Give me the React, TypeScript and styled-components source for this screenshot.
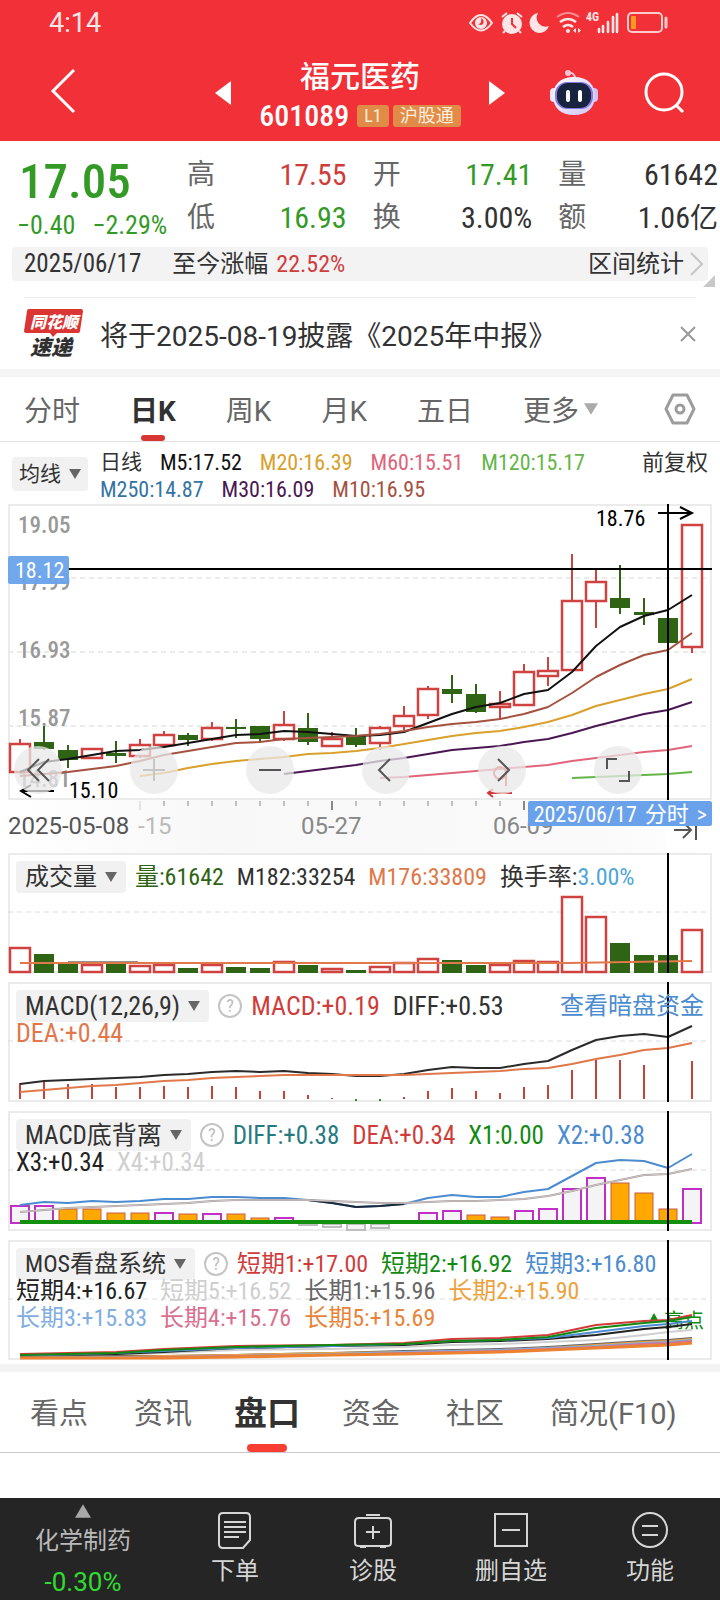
import React from 'react';
import styled, { createGlobalStyle, css } from 'styled-components';

const FONT = '"Roboto Condensed", Roboto, "Noto Sans CJK SC", sans-serif';
const WIDE_FONT = 'Roboto, "Noto Sans CJK SC", sans-serif';

const colors = {
  brand: '#f13037',
  up: '#cf3d3b',
  down: '#349a26',
  ink: '#323232',
  muted: '#666666',
  band: '#f4f4f4',
  chip: '#f1f1f1',
  frame: '#ebebeb',
  candleDown: '#2f6414',
  candleUp: '#d04240',
  blue: '#4b8bd0',
  orange: '#e0784a',
  tag: '#69a2ea',
};

const GlobalStyle = createGlobalStyle`
  * { box-sizing: border-box; }
  body { margin: 0; background: #fff; }
  button { font: inherit; color: inherit; background: none; border: 0; padding: 0; margin: 0; cursor: pointer; }
  a { color: inherit; text-decoration: none; }
  svg { display: block; }
`;

const Page = styled.div`
  display: flex;
  flex-direction: column;
  min-height: 100vh;
  font-family: ${FONT};
  color: ${colors.ink};
  overflow-x: hidden;
`;

/* ---------- header ---------- */

const Header = styled.header`
  background: ${colors.brand};
  color: #fff;
  height: 141px;
`;

const StatusBar = styled.div`
  display: flex;
  justify-content: space-between;
  align-items: center;
  height: 46px;
  padding: 0 50px 0 49px;
`;

const Clock = styled.time`
  font: 27px/30px Roboto, sans-serif;
  color: #ffe6e6;
`;

const TitleBar = styled.div`
  display: grid;
  grid-template-columns: 1fr auto 1fr;
  align-items: center;
  height: 94px;
  padding: 0 34px 0 50px;
`;

const TitleMiddle = styled.div`
  display: flex;
  align-items: center;
  justify-content: space-between;
  width: 290px;
  margin-right: 16px;
`;

const TitleText = styled.div`
  display: flex;
  flex-direction: column;
  align-items: center;
  padding-top: 6px;
`;

const StockName = styled.h1`
  margin: 0;
  font-size: 30px;
  line-height: 40px;
  font-weight: 500;
`;

const StockCode = styled.div`
  display: flex;
  align-items: center;
  gap: 4px;
  font-size: 30px;
  line-height: 38px;
  font-weight: 500;
`;

const CodeNumber = styled.span`
  margin-right: 4px;
`;

const Badge = styled.span`
  padding: 0 7px;
  border-radius: 3px;
  background: #e08c48;
  color: #fdeedd;
  font-size: 18px;
  line-height: 22px;
  font-weight: 400;
`;

const HeaderActions = styled.div`
  display: flex;
  justify-content: flex-end;
  align-items: center;
  gap: 46px;
`;

/* ---------- quote ---------- */

const Quote = styled.section`
  display: grid;
  grid-template-columns: 170px 186fr 186fr 160fr;
  height: 106px;
  padding: 12px 2px 0 17px;
`;

const LastPrice = styled.div`
  color: ${colors.down};
  display: flex;
  flex-direction: column;
`;

const PriceValue = styled.strong`
  font-size: 49px;
  line-height: 58px;
  font-weight: 500;
  padding-left: 2px;
`;

const PriceChange = styled.div`
  display: flex;
  gap: 17px;
  font-size: 26px;
  line-height: 28px;
`;

const QuoteColumn = styled.dl`
  margin: 0;
  padding-right: 26px;
  &:last-child { padding-right: 0; }
`;

const QuoteItem = styled.div`
  display: flex;
  justify-content: space-between;
  align-items: center;
  height: 43px;
`;

const QuoteLabel = styled.dt`
  color: ${colors.muted};
  font-size: 28px;
  line-height: 43px;
`;

const QuoteValue = styled.dd<{ $color?: string }>`
  margin: 0;
  font-size: 30px;
  line-height: 43px;
  white-space: nowrap;
  color: ${(p) => p.$color ?? colors.ink};
  small { font-size: 28px; }
`;

const RangeBar = styled.section`
  position: relative;
  display: flex;
  align-items: center;
  height: 34px;
  margin: 0 12px;
  padding: 0 4px 0 12px;
  border-radius: 4px;
  background: #f3f3f3;
  font-size: 24px;
  line-height: 34px;
`;

const RangeDate = styled.time`
  font-size: 25px;
`;

const RangeLabel = styled.span`
  margin: 0 8px 0 31px;
`;

const RangeButton = styled.button`
  display: flex;
  align-items: center;
  gap: 6px;
  margin-left: auto;
`;

const Corner = styled.span`
  position: absolute;
  right: -7px;
  bottom: -6px;
  border: 6px solid #c8c8c8;
  border-top-color: transparent;
  border-left-color: transparent;
`;

const Notice = styled.section`
  display: flex;
  align-items: center;
  height: 72px;
  margin: 16px 24px 0;
  border-top: 1px solid #e9e9e9;
  font-family: ${WIDE_FONT};
  font-size: 28px;
`;

const NoticeText = styled.a`
  flex: 1;
  margin-left: 16px;
  white-space: nowrap;
`;

const Band = styled.div`
  height: 8px;
  background: ${colors.band};
`;

/* ---------- period tabs ---------- */

const PeriodTabs = styled.nav`
  display: flex;
  align-items: stretch;
  gap: 50px;
  height: 65px;
  padding: 0 24px;
  border-bottom: 1px solid #e3e3e3;
  font-family: ${WIDE_FONT};
  font-size: 28px;
  color: ${colors.muted};
`;

const PeriodTab = styled.button<{ $active?: boolean }>`
  display: flex;
  align-items: center;
  gap: 5px;
  white-space: nowrap;
  ${(p) =>
    p.$active &&
    css`
      position: relative;
      color: ${colors.ink};
      font-weight: 700;
      &::after {
        content: '';
        position: absolute;
        left: 50%;
        bottom: 0;
        width: 24px;
        height: 6px;
        margin-left: -12px;
        border-radius: 3px;
        background: #d73532;
      }
    `}
`;

const SettingsButton = styled.button`
  margin-left: auto;
`;

const MaBar = styled.section`
  display: flex;
  align-items: flex-start;
  height: 62px;
  padding: 7px 12px 0;
  font-size: 22px;
  line-height: 27px;
`;

const MaSelect = styled.button`
  display: flex;
  align-items: center;
  justify-content: space-between;
  width: 76px;
  height: 34px;
  margin-top: 8px;
  padding: 0 7px;
  border-radius: 4px;
  background: ${colors.chip};
  font-size: 21px;
`;

const MaValues = styled.div`
  flex: 1;
  margin-left: 12px;
`;

const MaRow = styled.div`
  display: flex;
  gap: 18px;
`;

const MaTitle = styled.span`
  font-size: 21px;
`;

const Tint = styled.span<{ $color: string }>`
  color: ${(p) => p.$color};
  white-space: nowrap;
`;

/* ---------- charts ---------- */

const Charts = styled.main`
  display: flex;
  flex-direction: column;
  padding: 0 8px 4px;
`;

const Panel = styled.section`
  display: grid;
  margin-bottom: 9px;
  box-shadow: inset 0 0 0 2px ${colors.frame};
  & > * { grid-area: 1 / 1; min-width: 0; }
  &:last-child { margin-bottom: 0; }
`;

const PricePanel = styled(Panel)`
  margin-bottom: 0;
`;

const Plot = styled.svg`
  width: 100%;
  height: auto;
  overflow: visible;
  font-family: ${FONT};
`;

const ChartTools = styled.div`
  align-self: end;
  display: flex;
  justify-content: space-between;
  padding: 0 70px 6px 6px;
`;

const ToolButton = styled.button<{ $dim?: boolean }>`
  display: grid;
  place-items: center;
  width: 48px;
  height: 48px;
  border-radius: 50%;
  background: rgba(232, 232, 232, 0.75);
  color: ${(p) => (p.$dim ? '#c6c6c6' : '#555')};
`;

const Axis = styled.div`
  position: relative;
  height: 53px;
  background: linear-gradient(90deg, #fff 0, #f8f8f8 200px, #fafafa 85%, #fff 100%);
`;

const DateTag = styled.button`
  position: absolute;
  right: 0;
  top: 1px;
  display: flex;
  gap: 8px;
  height: 25px;
  padding: 0 5px 0 6px;
  border-radius: 2px;
  background: ${colors.tag};
  color: #fff;
  font-size: 22px;
  line-height: 27px;
`;

const LatestButton = styled.button`
  position: absolute;
  right: 6px;
  top: 10px;
  display: grid;
  place-items: center;
  width: 40px;
  height: 40px;
  border-radius: 6px;
  background: #fff;
`;

const Legend = styled.div<{ $size: number }>`
  padding: 7px 8px 0;
  font-size: ${(p) => p.$size}px;
`;

const LegendRow = styled.div`
  display: flex;
  align-items: center;
  gap: 13px;
  line-height: 27px;
  &:first-child {
    height: 34px;
    margin-bottom: -3px;
  }
`;

const IndicatorSelect = styled.button`
  display: flex;
  align-items: center;
  gap: 8px;
  height: 32px;
  padding: 0 9px;
  margin-right: -4px;
  border-radius: 4px;
  background: ${colors.chip};
  white-space: nowrap;
`;

const HelpButton = styled.button`
  width: 24px;
  height: 24px;
  margin-right: -4px;
  flex: none;
  border: 2px solid #c4c4c4;
  border-radius: 50%;
  color: #bbb;
  font-size: 18px;
  line-height: 20px;
`;

const LegendLink = styled.a`
  margin-left: auto;
  color: ${colors.blue};
  font-size: 24px;
  white-space: nowrap;
`;

/* ---------- lower tabs and footer ---------- */

const InfoTabs = styled.nav`
  display: flex;
  gap: 46px;
  height: 81px;
  padding: 0 30px;
  border-bottom: 1px solid #c9c9c9;
  font-family: ${WIDE_FONT};
  font-size: 29px;
  color: ${colors.muted};
`;

const InfoTab = styled.button<{ $active?: boolean }>`
  white-space: nowrap;
  padding-bottom: 2px;
  ${(p) =>
    p.$active &&
    css`
      position: relative;
      margin: 0 -4px;
      color: ${colors.ink};
      font-size: 33px;
      font-weight: 700;
      &::after {
        content: '';
        position: absolute;
        left: 50%;
        bottom: 0;
        width: 40px;
        height: 8px;
        margin-left: -20px;
        border-radius: 4px;
        background: #f93c34;
      }
    `}
`;

const Footer = styled.footer`
  display: grid;
  grid-template-columns: 166fr 138fr 138fr 138fr 140fr;
  height: 102px;
  margin-top: auto;
  background: #252525;
  color: #d6d6d6;
  font-size: 24px;
`;

const FooterButton = styled.button`
  display: flex;
  flex-direction: column;
  align-items: center;
  padding-top: 14px;
`;

const FooterLabel = styled.span`
  margin-top: 5px;
  line-height: 32px;
`;

const Sector = styled.a`
  display: flex;
  flex-direction: column;
  align-items: center;
  padding-top: 6px;
`;

const SectorName = styled.span`
  margin-top: 6px;
  line-height: 34px;
  color: #b9b9b9;
`;

const SectorChange = styled.span`
  margin-top: 8px;
  font-family: ${WIDE_FONT};
  font-size: 26px;
  line-height: 32px;
  color: #2fdc2f;
`;

/* ---------- small drawings ---------- */

const Caret = ({ size = 12, color = '#666', up = false }: { size?: number; color?: string; up?: boolean }) => (
  <svg width={size} height={size - 2} viewBox="0 0 12 10" aria-hidden="true">
    <path d={up ? 'M6 0 12 10H0Z' : 'M0 0H12L6 10Z'} fill={color} />
  </svg>
);

const StatusIcons = () => (
  <svg width="201" height="32" viewBox="0 -4 201 32" fill="none" stroke="#ffe6e6" aria-hidden="true">
    <path d="M1 12Q12 -4 23 12Q12 27 1 12Z" strokeWidth="2" />
    <circle cx="12" cy="12" r="6" fill="#ffe6e6" stroke="none" />
    <path d="M12 7a4 4 0 0 1 2 6q-2 2-5 0q4 0 3-6Z" fill={colors.brand} stroke="none" />
    <circle cx="43" cy="13" r="9" fill="#ffe6e6" stroke="#ffe6e6" strokeWidth="2" />
    <path d="M33 6l5-4M53 6l-5-4M36 20l-2 2M50 20l2 2" strokeWidth="2" />
    <path d="M43 7v6l4 4" stroke={colors.brand} strokeWidth="2" />
    <path d="M69 2a10 10 0 1 0 11 13a9 9 0 0 1-11-13Z" fill="#ffe6e6" stroke="none" />
    <path d="M88 6q11-8 22 0" strokeWidth="2" opacity=".5" />
    <path d="M91 11q8-6 16 0M94 16q5-4 10 0" strokeWidth="2.6" />
    <circle cx="99" cy="20" r="2" fill="#ffe6e6" stroke="none" />
    <path d="M107 17v5l-3-2.500ZM109 17v5l3-2.500Z" fill="#ffe6e6" stroke="none" />
    <text x="117" y="10" fontSize="12" fontWeight="700" fill="#ffe6e6" stroke="none">4G</text>
    <path d="M130 18v3M134 15v6M139 11v10M144 6v15M148 3v18" strokeWidth="2.6" strokeLinecap="round" />
    <rect x="159" y="2" width="34" height="19" rx="4" strokeWidth="2" opacity=".85" />
    <rect x="162" y="5" width="5" height="13" rx="1" fill="#ff9a1e" stroke="none" />
    <path d="M197 7v9" strokeWidth="3" strokeLinecap="round" opacity=".85" />
  </svg>
);

const Robot = () => (
  <svg width="48" height="46" viewBox="0 0 48 46" aria-hidden="true">
    <defs>
      <linearGradient id="shell" x1="0" y1="0" x2="1" y2="1">
        <stop offset="0" stopColor="#ffffff" />
        <stop offset="1" stopColor="#cfc4f7" />
      </linearGradient>
    </defs>
    <path d="M18 3q7-1 7 6" fill="none" stroke="#ffc5d2" strokeWidth="2" />
    <circle cx="18" cy="3" r="3" fill="#ffc5d2" />
    <rect x="0" y="18" width="8" height="14" rx="4" fill="#f0e6fb" />
    <rect x="40" y="18" width="8" height="14" rx="4" fill="#cfc3f6" />
    <path d="M24 7C38 7 45 15 45 26C45 38 37 45 24 45S3 38 3 26C3 15 10 7 24 7Z" fill="url(#shell)" />
    <rect x="5" y="12" width="38" height="27" rx="12" fill="#8279dc" />
    <rect x="7" y="13" width="34" height="25" rx="11" fill="#18233f" />
    <path d="M18 22v8M30 22v8" stroke="#fff" strokeWidth="4" strokeLinecap="round" />
  </svg>
);

const NewsLogo = () => (
  <svg width="60" height="52" viewBox="0 0 60 52" role="img" aria-label="同花顺速递">
    <path d="M5 1H57q2 0 2 2L56 23q0 2-2 2H33l-4 4-3-4H2q-2 0-2-2L3 3q0-2 2-2Z" fill="#da3433" />
    <text x="6" y="20" fontSize="16" fontWeight="900" fontStyle="italic" fill="#fff">同花顺</text>
    <text x="6" y="47" fontSize="21" fontWeight="900" fontStyle="italic" fill="#303030">速递</text>
  </svg>
);

/* ---------- data ---------- */

const X = (i: number) => 12 + 24 * i;
const CROSS_X = X(27);

const points = (ys: number[], from = 0) => ys.map((y, k) => `${X(from + k)},${y}`).join(' ');

type Candle = [up: 0 | 1, high: number, top: number, bottom: number, low: number];

const candles: Candle[] = [
  [1, 235, 240, 268, 268], [0, 222, 238, 245, 246], [0, 241, 246, 256, 264], [1, 244, 245, 254, 254],
  [0, 237, 249, 252, 259], [1, 235, 241, 252, 254], [1, 227, 231, 241, 243], [0, 229, 231, 236, 242],
  [1, 218, 224, 235, 237], [0, 215, 223, 225, 234], [0, 222, 222, 235, 238], [1, 207, 221, 235, 237],
  [0, 209, 224, 238, 241], [1, 228, 235, 242, 242], [0, 224, 231, 241, 243], [1, 222, 224, 239, 246],
  [1, 202, 212, 222, 226], [1, 182, 185, 211, 215], [0, 171, 185, 190, 199], [0, 180, 190, 208, 209],
  [1, 187, 200, 203, 215], [1, 160, 168, 201, 201], [1, 153, 167, 172, 182], [1, 50, 97, 166, 166],
  [1, 66, 78, 97, 124], [0, 61, 94, 104, 110], [0, 94, 108, 111, 121], [0, 114, 114, 139, 139],
  [1, 21, 21, 143, 149],
];

const averages = [
  { color: '#111', from: 0, ys: [268, 258, 255, 251, 247, 246, 243, 239, 235, 231, 230, 227, 228, 230, 232, 231, 228, 219, 210, 203, 199, 190, 186, 168, 142, 123, 112, 106, 91] },
  { color: '#a5513f', from: 0, ys: [272, 270, 268, 265, 262, 257, 251, 247, 243, 239, 238, 235, 234, 233, 232, 230, 227, 223, 220, 218, 215, 210, 203, 189, 173, 161, 151, 146, 129] },
  { color: '#d9a02b', from: 5, ys: [272, 269, 264, 260, 257, 255, 253, 250, 249, 247, 244, 240, 236, 232, 229, 227, 223, 218, 211, 202, 196, 190, 185, 175] },
  { color: '#4a1752', from: 11, ys: [270, 267, 264, 261, 257, 254, 250, 246, 244, 242, 238, 235, 229, 222, 216, 210, 206, 198] },
  { color: '#e0647a', from: 15, ys: [274, 273, 271, 269, 267, 265, 263, 261, 257, 254, 251, 248, 246, 242] },
  { color: '#64b548', from: 23, ys: [274, 273, 272, 271, 270, 268] },
];

const volumes: [0 | 1, number][] = [
  [1, 95], [0, 101], [0, 109], [1, 112], [0, 111], [1, 113], [1, 112], [0, 115], [1, 112], [0, 114],
  [0, 115], [1, 109], [0, 112], [1, 116], [0, 117], [1, 114], [1, 110], [1, 106], [0, 107], [0, 112],
  [1, 112], [1, 108], [1, 109], [1, 44], [1, 64], [0, 90], [0, 102], [0, 102], [1, 77],
];

const macdBars = [101, 100, 102, 102, 105, 105, 104, 105, 104, 105, 109, 109, 113, 116, 119, 119, 115, 109, 106, 109, 111, 105, 103, 88, 78, 78, 83, 95, 79];
const macdDiff = [102, 99, 98, 97, 96, 95, 93, 92, 90, 89, 90, 89, 91, 92, 94, 94, 92, 88, 85, 86, 86, 82, 79, 68, 58, 54, 52, 55, 44];
const macdDea = [110, 108, 106, 104, 103, 101, 99, 98, 96, 95, 94, 93, 93, 93, 93, 93, 93, 92, 91, 90, 89, 87, 86, 82, 77, 73, 68, 66, 61];

const divBars: ['m' | 'o' | 'g' | '', number][] = [
  ['m', 95], ['m', 95], ['o', 98], ['o', 98], ['o', 102], ['o', 102], ['m', 102], ['o', 103], ['m', 103], ['o', 103],
  ['o', 107], ['m', 107], ['g', 114], ['g', 116], ['g', 119], ['g', 117], ['', 0], ['m', 102], ['m', 100], ['o', 104],
  ['o', 106], ['m', 100], ['m', 98], ['m', 78], ['m', 67], ['o', 72], ['o', 82], ['o', 98], ['m', 78],
];
const divFast = [94, 91, 92, 90, 91, 90, 88, 88, 86, 86, 87, 87, 89, 92, 96, 95, 93, 87, 84, 86, 86, 81, 78, 65, 52, 49, 50, 57, 43];
const divSlow = [101, 99, 97, 96, 95, 94, 93, 92, 90, 89, 89, 89, 89, 90, 91, 92, 92, 91, 90, 90, 89, 88, 85, 80, 74, 69, 64, 63, 58];

const MOS_STOPS = [0, 4, 6, 9, 13, 16, 18, 20, 22, 24, 26, 27, 28];
const mosLines: [string, number, number[]][] = [
  ['#d0d0d0', 2, [117, 115, 113, 110, 109, 107, 105, 104, 102, 100, 95, 92, 90]],
  ['#222', 2, [117, 114, 112, 108, 106, 105, 102, 101, 99, 95, 89, 87, 84]],
  ['#4b8bd0', 2, [116, 113, 111, 108, 106, 104, 101, 100, 98, 92, 86, 84, 81]],
  ['#d23a39', 2, [114, 112, 109, 106, 105, 103, 99, 98, 95, 85, 81, 80, 75]],
  ['#118a11', 2, [115, 113, 110, 107, 105, 104, 101, 100, 97, 88, 83, 81, 77]],
  ['#666', 2, [117, 116, 116, 115, 113, 111, 110, 109, 107, 104, 101, 100, 98]],
  ['#eba23c', 2, [118, 117, 116, 115, 113, 112, 111, 110, 108, 105, 102, 101, 99]],
  ['#80aee2', 2, [118, 117, 117, 116, 114, 112, 111, 110, 108, 106, 103, 102, 100]],
  ['#d8708f', 2, [118, 118, 117, 116, 115, 113, 112, 111, 109, 107, 104, 103, 101]],
  ['#ec8130', 3, [118, 118, 118, 117, 115, 114, 113, 112, 110, 108, 106, 105, 103]],
];

interface LegendEntry {
  text: string;
  color: string;
  value?: string;
  valueColor?: string;
}

const volumeLegend: LegendEntry[][] = [
  [
    { text: '量:61642', color: '#2f6414' },
    { text: 'M182:33254', color: colors.ink },
    { text: 'M176:33809', color: colors.orange },
    { text: '换手率:', color: colors.ink, value: '3.00%', valueColor: '#4fa6d8' },
  ],
];

const macdLegend: LegendEntry[][] = [
  [{ text: 'MACD:+0.19', color: colors.up }, { text: 'DIFF:+0.53', color: colors.ink }],
  [{ text: 'DEA:+0.44', color: colors.orange }],
];

const divergenceLegend: LegendEntry[][] = [
  [
    { text: 'DIFF:+0.38', color: '#257a80' },
    { text: 'DEA:+0.34', color: colors.up },
    { text: 'X1:0.00', color: '#118a11' },
    { text: 'X2:+0.38', color: colors.blue },
  ],
  [{ text: 'X3:+0.34', color: '#222' }, { text: 'X4:+0.34', color: '#cfcfcf' }],
];

const mosLegend: LegendEntry[][] = [
  [
    { text: '短期1:+17.00', color: colors.up },
    { text: '短期2:+16.92', color: '#118a11' },
    { text: '短期3:+16.80', color: colors.blue },
  ],
  [
    { text: '短期4:+16.67', color: '#222' },
    { text: '短期5:+16.52', color: '#cfcfcf' },
    { text: '长期1:+15.96', color: '#666' },
    { text: '长期2:+15.90', color: '#eba23c' },
  ],
  [
    { text: '长期3:+15.83', color: '#80aee2' },
    { text: '长期4:+15.76', color: '#d8708f' },
    { text: '长期5:+15.69', color: '#e8843a' },
  ],
];

/* ---------- chart pieces ---------- */

const Crosshair = ({ height }: { height: number }) => (
  <path d={`M${CROSS_X} 0V${height}`} stroke="#000" strokeWidth="2" />
);

const Dashes = ({ y, wide }: { y: number; wide?: boolean }) => (
  <path d={`M0 ${y}H702`} stroke={wide ? '#ebebeb' : '#dcdcdc'} strokeWidth={wide ? 2 : 1} strokeDasharray="5 4" />
);

const Line = ({ ys, color, from = 0, width = 2 }: { ys: number[]; color: string; from?: number; width?: number }) => (
  <polyline points={points(ys, from)} fill="none" stroke={color} strokeWidth={width} strokeLinejoin="round" />
);

const PriceChart = () => (
  <Plot viewBox="0 0 704 296" role="img" aria-label="日K">
    {[74, 148, 222].map((y) => <Dashes key={y} y={y} wide />)}
    <g fontSize="23" fill="#999" fontWeight="500">
      <text x="10" y="29">19.05</text>
      <text x="10" y="86">17.99</text>
      <text x="10" y="154">16.93</text>
      <text x="10" y="222">15.87</text>
      <text x="10" y="283">14.81</text>
    </g>
    {candles.map(([up, high, top, bottom, low], i) =>
      up ? (
        <g key={i} stroke={colors.candleUp} fill="none">
          <path d={`M${X(i)} ${high}V${top}M${X(i)} ${bottom}V${low}`} strokeWidth="2" />
          <rect x={X(i) - 10} y={top} width="20" height={bottom - top} strokeWidth="2.500" />
        </g>
      ) : (
        <g key={i} fill={colors.candleDown}>
          <rect x={X(i) - 1} y={high} width="2" height={low - high} />
          <rect x={X(i) - 10} y={top} width="20" height={bottom - top} />
        </g>
      ),
    )}
    {averages.map((a) => <Line key={a.color} ys={a.ys} color={a.color} from={a.from} />)}
    <g fill="none" stroke="#d23a39" strokeWidth="2">
      <circle cx="492" cy="269" r="6" />
      <path d="M498 264V282M504 289H481M485 285l-5 4 5 4" />
    </g>
    <g fill="none" stroke="#000" strokeWidth="2">
      <path d="M46 287H13M23 281L13 287L23 293" />
      <path d="M650 9H683M672 3L684 9L672 15" />
      <path d="M60 65H704" />
    </g>
    <text x="61" y="294" fontSize="22">15.10</text>
    <text x="588" y="22" fontSize="22">18.76</text>
    <rect x="0" y="52" width="61" height="28" rx="2" fill={colors.tag} opacity=".95" />
    <text x="7" y="74" fontSize="22" fill="#fff">18.12</text>
    <Crosshair height={296} />
  </Plot>
);

const AxisTicks = () => (
  <Plot viewBox="0 0 704 53" aria-hidden="true">
    <path d={Array.from({ length: 22 }, (_, k) => `M${X(6 + k)} 1v5`).join('')} stroke="#888" />
    <path d={`M${X(13)} 1v9M${X(21)} 1v9`} stroke="#888" strokeWidth="2" />
    <path d={`M${X(5)} 1v9`} stroke="#e4e4e4" strokeWidth="2" />
    <g fontSize="24" fontFamily={WIDE_FONT}>
      <text x="0" y="34" fill="#555">2025-05-08</text>
      <text x="130" y="34" fill="#bbb">-15</text>
      <text x="293" y="34" fill="#888">05-27</text>
      <text x="485" y="34" fill="#888">06-09</text>
    </g>
  </Plot>
);

const VolumeChart = () => (
  <Plot viewBox="0 0 704 120" aria-hidden="true">
    <Dashes y={59} />
    {volumes.map(([up, top], i) =>
      up ? (
        <rect key={i} x={X(i) - 10} y={top} width="20" height={119 - top} fill="#fff" stroke={colors.candleUp} strokeWidth="2.500" />
      ) : (
        <rect key={i} x={X(i) - 10} y={top} width="20" height={120 - top} fill={colors.candleDown} />
      ),
    )}
    <path d="M60 109H130M500 110H560" stroke="#222" strokeWidth="1" />
    <path d="M12 110H560L620 109L684 108" fill="none" stroke={colors.orange} strokeWidth="2" />
    <Crosshair height={120} />
  </Plot>
);

const MacdChart = () => (
  <Plot viewBox="0 0 704 120" aria-hidden="true">
    <Dashes y={59} />
    {macdBars.map((y, i) => (
      <path key={i} d={`M${X(i)} 117V${y}`} stroke={y > 117 ? '#2a8a2a' : '#c8403e'} strokeWidth="2" />
    ))}
    <Line ys={macdDiff} color="#2a2a2a" />
    <Line ys={macdDea} color={colors.orange} />
    <Crosshair height={120} />
  </Plot>
);

const DivergenceChart = () => (
  <Plot viewBox="0 0 704 120" aria-hidden="true">
    <Dashes y={59} />
    {divBars.map(([kind, y], i) => {
      if (!kind) return null;
      if (kind === 'g') {
        return <rect key={i} x={X(i) - 9} y="113" width="18" height={y - 113} fill="#f4f4f4" stroke="#bdbdbd" strokeWidth="2" />;
      }
      const orange = kind === 'o';
      return (
        <rect key={i} x={X(i) - 9} y={y} width="18" height={112 - y} fill={orange ? '#ffa800' : '#f4f3f5'} stroke={orange ? '#c75a4a' : '#c22fc6'} strokeWidth={orange ? 1 : 2} />
      );
    })}
    <Line ys={divFast} color="#4b8bd0" />
    <Line ys={divFast.slice(12, 17)} from={12} color="#1c2a38" />
    <Line ys={divSlow} color="#a79c9c" />
    <Line ys={divSlow} color="#cfc6c6" width={1} />
    <path d="M12 111H684" stroke="#14900f" strokeWidth="4" />
    <Crosshair height={120} />
  </Plot>
);

const MosChart = () => (
  <Plot viewBox="0 0 704 120" aria-hidden="true">
    <Dashes y={59} />
    <path d="M646 73L651 82H641Z" fill="#118a11" />
    <text x="656" y="88" fontSize="20" fill="#118a11">高点</text>
    {mosLines.map(([color, width, ys]) => (
      <polyline key={color} points={ys.map((y, k) => `${X(MOS_STOPS[k])},${y}`).join(' ')} fill="none" stroke={color} strokeWidth={width} />
    ))}
    <Crosshair height={120} />
  </Plot>
);

interface IndicatorProps {
  name: string;
  help?: boolean;
  rows: LegendEntry[][];
  link?: string;
  size?: number;
  children: React.ReactNode;
}

const Indicator = ({ name, help, rows, link, size = 24, children }: IndicatorProps) => (
  <Panel>
    {children}
    <Legend $size={size}>
      {rows.map((row, r) => (
        <LegendRow key={r}>
          {r === 0 && <IndicatorSelect>{name}<Caret /></IndicatorSelect>}
          {r === 0 && help && <HelpButton aria-label="帮助">?</HelpButton>}
          {row.map((entry) => (
            <Tint key={entry.text} $color={entry.color}>
              {entry.text}
              {entry.value && <Tint $color={entry.valueColor ?? entry.color}>{entry.value}</Tint>}
            </Tint>
          ))}
          {r === 0 && link && <LegendLink href="#funds">{link}</LegendLink>}
        </LegendRow>
      ))}
    </Legend>
  </Panel>
);

const toolIcons: { label: string; path: string; dim?: boolean }[] = [
  { label: '更早', path: 'M13 1L2 12L13 23M23 1L12 12L23 23' },
  { label: '放大', path: 'M12 1V23M1 12H23', dim: true },
  { label: '缩小', path: 'M1 12H23' },
  { label: '向左', path: 'M16 1L5 12L16 23' },
  { label: '向右', path: 'M8 1L19 12L8 23' },
  { label: '全屏', path: 'M1 11V1H11M23 13V23H13' },
];

const footerItems: { label: string; icon: React.ReactNode }[] = [
  {
    label: '下单',
    icon: <path d="M5 1H28Q32 1 32 5V28L25 36H5Q1 36 1 32V5Q1 1 5 1ZM6 10H28M6 15H28M6 20H28M6 25H21" />,
  },
  {
    label: '诊股',
    icon: <path d="M10 3H24M3 6H31Q35 6 35 10V31Q35 34 31 34H3Q-1 34 -1 31V10Q-1 6 3 6ZM17 14V27M10 20H24M4 35H10M24 35H30" />,
  },
  { label: '删自选', icon: <path d="M1 2H33V34H1ZM8 18H26" /> },
  { label: '功能', icon: <path d="M17 1A17 17 0 0 1 17 35A17 17 0 0 1 17 1ZM9 14H25M9 23H25" /> },
];

export default function App() {
  return (
    <Page>
      <GlobalStyle />
      <Header>
        <StatusBar>
          <Clock>4:14</Clock>
          <StatusIcons />
        </StatusBar>
        <TitleBar>
          <div>
            <button aria-label="返回">
              <svg width="26" height="44" viewBox="0 0 26 44" fill="none" stroke="#fff" strokeWidth="3">
                <path d="M24 1L3 22L24 43" />
              </svg>
            </button>
          </div>
          <TitleMiddle>
            <button aria-label="上一只">
              <svg width="16" height="24" viewBox="0 0 16 24"><path d="M16 0V24L0 12Z" fill="#fff" /></svg>
            </button>
            <TitleText>
              <StockName>福元医药</StockName>
              <StockCode>
                <CodeNumber>601089</CodeNumber>
                <Badge>L1</Badge>
                <Badge>沪股通</Badge>
              </StockCode>
            </TitleText>
            <button aria-label="下一只">
              <svg width="16" height="24" viewBox="0 0 16 24"><path d="M0 0V24L16 12Z" fill="#fff" /></svg>
            </button>
          </TitleMiddle>
          <HeaderActions>
            <button aria-label="智能助手"><Robot /></button>
            <button aria-label="搜索">
              <svg width="42" height="42" viewBox="0 0 42 42" fill="none" stroke="#fff" strokeWidth="3">
                <circle cx="20" cy="20" r="18" />
                <path d="M32 33L39 40" />
              </svg>
            </button>
          </HeaderActions>
        </TitleBar>
      </Header>

      <Quote>
        <LastPrice>
          <PriceValue>17.05</PriceValue>
          <PriceChange><span>−0.40</span><span>−2.29%</span></PriceChange>
        </LastPrice>
        <QuoteColumn>
          <QuoteItem><QuoteLabel>高</QuoteLabel><QuoteValue $color={colors.up}>17.55</QuoteValue></QuoteItem>
          <QuoteItem><QuoteLabel>低</QuoteLabel><QuoteValue $color={colors.down}>16.93</QuoteValue></QuoteItem>
        </QuoteColumn>
        <QuoteColumn>
          <QuoteItem><QuoteLabel>开</QuoteLabel><QuoteValue $color={colors.down}>17.41</QuoteValue></QuoteItem>
          <QuoteItem><QuoteLabel>换</QuoteLabel><QuoteValue>3.00%</QuoteValue></QuoteItem>
        </QuoteColumn>
        <QuoteColumn>
          <QuoteItem><QuoteLabel>量</QuoteLabel><QuoteValue>61642</QuoteValue></QuoteItem>
          <QuoteItem><QuoteLabel>额</QuoteLabel><QuoteValue>1.06<small>亿</small></QuoteValue></QuoteItem>
        </QuoteColumn>
      </Quote>

      <RangeBar>
        <RangeDate>2025/06/17</RangeDate>
        <RangeLabel>至今涨幅</RangeLabel>
        <Tint $color={colors.up}>22.52%</Tint>
        <RangeButton>
          区间统计
          <svg width="14" height="24" viewBox="0 0 14 24" fill="none" stroke="#c6c6c6" strokeWidth="2">
            <path d="M1 1L12 12L1 23" />
          </svg>
        </RangeButton>
        <Corner />
      </RangeBar>

      <Notice>
        <NewsLogo />
        <NoticeText href="#notice">将于2025-08-19披露《2025年中报》</NoticeText>
        <button aria-label="关闭">
          <svg width="16" height="16" viewBox="0 0 16 16" stroke="#999" strokeWidth="2"><path d="M1 1L15 15M15 1L1 15" /></svg>
        </button>
      </Notice>
      <Band />

      <PeriodTabs>
        <PeriodTab>分时</PeriodTab>
        <PeriodTab $active>日K</PeriodTab>
        <PeriodTab>周K</PeriodTab>
        <PeriodTab>月K</PeriodTab>
        <PeriodTab>五日</PeriodTab>
        <PeriodTab>更多<Caret size={14} color="#aaa" /></PeriodTab>
        <SettingsButton aria-label="设置">
          <svg width="32" height="32" viewBox="0 0 32 32" fill="none" stroke="#9c9c9c" strokeWidth="3" strokeLinejoin="round">
            <path d="M9 2H23L30 16L23 30H9L2 16Z" />
            <circle cx="16" cy="16" r="4" />
          </svg>
        </SettingsButton>
      </PeriodTabs>

      <MaBar>
        <MaSelect>均线<Caret /></MaSelect>
        <MaValues>
          <MaRow>
            <MaTitle>日线</MaTitle>
            <Tint $color="#111">M5:17.52</Tint>
            <Tint $color="#d9a02b">M20:16.39</Tint>
            <Tint $color="#e0647a">M60:15.51</Tint>
            <Tint $color="#64b548">M120:15.17</Tint>
          </MaRow>
          <MaRow>
            <Tint $color="#3673a5">M250:14.87</Tint>
            <Tint $color="#4a1752">M30:16.09</Tint>
            <Tint $color="#a5513f">M10:16.95</Tint>
          </MaRow>
        </MaValues>
        <button>前复权</button>
      </MaBar>

      <Charts>
        <PricePanel>
          <PriceChart />
          <ChartTools>
            {toolIcons.map((t) => (
              <ToolButton key={t.label} aria-label={t.label} $dim={t.dim}>
                <svg width="24" height="24" viewBox="0 0 24 24" fill="none" stroke="currentColor" strokeWidth="2">
                  <path d={t.path} />
                </svg>
              </ToolButton>
            ))}
          </ChartTools>
        </PricePanel>
        <Axis>
          <AxisTicks />
          <LatestButton aria-label="最新">
            <svg width="24" height="22" viewBox="0 0 24 22" fill="none" stroke="#555" strokeWidth="2">
              <path d="M0 11H17M9 3L17 11L9 19M22 1V21" />
            </svg>
          </LatestButton>
          <DateTag><span>2025/06/17</span><span>分时</span><span>&gt;</span></DateTag>
        </Axis>

        <Indicator name="成交量" rows={volumeLegend}>
          <VolumeChart />
        </Indicator>
        <Indicator name="MACD(12,26,9)" help size={26} link="查看暗盘资金" rows={macdLegend}>
          <MacdChart />
        </Indicator>
        <Indicator name="MACD底背离" help size={25} rows={divergenceLegend}>
          <DivergenceChart />
        </Indicator>
        <Indicator name="MOS看盘系统" help rows={mosLegend}>
          <MosChart />
        </Indicator>
      </Charts>
      <Band />

      <InfoTabs>
        <InfoTab>看点</InfoTab>
        <InfoTab>资讯</InfoTab>
        <InfoTab $active>盘口</InfoTab>
        <InfoTab>资金</InfoTab>
        <InfoTab>社区</InfoTab>
        <InfoTab>简况(F10)</InfoTab>
      </InfoTabs>

      <Footer>
        <Sector href="#sector">
          <Caret size={16} color="#a8a8a8" up />
          <SectorName>化学制药</SectorName>
          <SectorChange>-0.30%</SectorChange>
        </Sector>
        {footerItems.map((item) => (
          <FooterButton key={item.label}>
            <svg width="38" height="38" viewBox="-2 0 38 38" fill="none" stroke="#d6d6d6" strokeWidth="2">{item.icon}</svg>
            <FooterLabel>{item.label}</FooterLabel>
          </FooterButton>
        ))}
      </Footer>
    </Page>
  );
}
